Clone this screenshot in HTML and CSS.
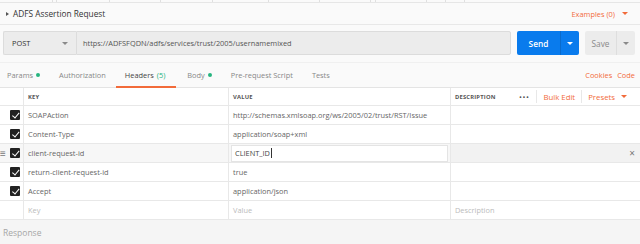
FILE: index.html
```html
<!DOCTYPE html>
<html lang="en">
<head>
    <meta charset="UTF-8">
    <meta name="viewport" content="width=device-width, initial-scale=1.0">
    <title>ADFS Assertion Request</title>
    <link rel="stylesheet" href="styles.css">
</head>
<body>
    <div class="window-tabs">
        <span style="width:52px"></span>
        <span style="width:3px"></span>
        <span style="width:52px"></span>
        <span style="width:50px"></span>
        <span style="width:51px"></span>
        <span style="width:55px"></span>
        <span style="width:50px"></span>
        <span style="width:50px"></span>
        <span style="width:4px"></span>
        <span style="width:50px"></span>
        <span style="width:18px"></span>
        <span style="width:18px"></span>
    </div>

    <div class="title-bar">
        <div class="title"><span class="arrow"></span>ADFS Assertion Request</div>
        <div class="examples">Examples (0) <span class="caret orange"></span></div>
    </div>

    <div class="url-bar">
        <div class="method">POST <span class="caret grey"></span></div>
        <div class="url">https://ADFSFQDN/adfs/services/trust/2005/usernamemixed</div>
        <div class="send">
            <span class="send-label">Send</span>
            <span class="send-split"><span class="caret white"></span></span>
        </div>
        <div class="save">
            <span class="save-label">Save</span>
            <span class="save-split"><span class="caret grey"></span></span>
        </div>
    </div>

    <div class="tabs">
        <span class="tab">Params <i class="dot"></i></span>
        <span class="tab">Authorization</span>
        <span class="tab active">Headers <em>(5)</em></span>
        <span class="tab">Body <i class="dot"></i></span>
        <span class="tab">Pre-request Script</span>
        <span class="tab">Tests</span>
        <span class="tab-links"><a>Cookies</a><a>Code</a></span>
    </div>

    <div class="grid">
        <div class="row head">
            <div class="cell check"></div>
            <div class="cell">KEY</div>
            <div class="cell">VALUE</div>
            <div class="cell desc-head">
                <span>DESCRIPTION</span>
                <span class="head-tools">
                    <span class="more">•••</span>
                    <a>Bulk Edit</a>
                    <a class="presets">Presets <span class="caret orange"></span></a>
                </span>
            </div>
        </div>
        <div class="row">
            <div class="cell check"><span class="box"></span></div>
            <div class="cell">SOAPAction</div>
            <div class="cell">http://schemas.xmlsoap.org/ws/2005/02/trust/RST/Issue</div>
            <div class="cell"></div>
        </div>
        <div class="row">
            <div class="cell check"><span class="box"></span></div>
            <div class="cell">Content-Type</div>
            <div class="cell">application/soap+xml</div>
            <div class="cell"></div>
        </div>
        <div class="row hover">
            <div class="cell check"><span class="handle">≡</span><span class="box"></span></div>
            <div class="cell">client-request-id</div>
            <div class="cell"><div class="edit">CLIENT_ID<span class="cursor"></span></div></div>
            <div class="cell desc-del"><span class="close">×</span></div>
        </div>
        <div class="row">
            <div class="cell check"><span class="box"></span></div>
            <div class="cell">return-client-request-id</div>
            <div class="cell">true</div>
            <div class="cell"></div>
        </div>
        <div class="row">
            <div class="cell check"><span class="box"></span></div>
            <div class="cell">Accept</div>
            <div class="cell">application/json</div>
            <div class="cell"></div>
        </div>
        <div class="row placeholder">
            <div class="cell check"></div>
            <div class="cell">Key</div>
            <div class="cell">Value</div>
            <div class="cell">Description</div>
        </div>
    </div>

    <div class="response">Response</div>
</body>
</html>
```

FILE: styles.css
```css
body {
    margin: 0;
    width: 640px;
    height: 244px;
    overflow: hidden;
    background: #fafafa;
    font-family: "Open Sans", "Noto Sans", sans-serif;
    font-size: 7.4px;
    color: #666;
}
a {
    color: #f26b3a;
}

/* strip of the window tabs above */
.window-tabs {
    display: flex;
    height: 2px;
    border-bottom: 1px solid #e6e6e6;
}
.window-tabs span {
    border-right: 1px solid #e0e0e0;
}

.title-bar {
    display: flex;
    align-items: center;
    justify-content: space-between;
    height: 21px;
    padding: 0 12px 0 6px;
    border-bottom: 1px solid #e8e8e8;
}
.title {
    display: flex;
    align-items: center;
    color: #333;
    font-size: 8.3px;
}
.arrow {
    width: 0;
    height: 0;
    margin-right: 4px;
    border-top: 2.5px solid transparent;
    border-bottom: 2.5px solid transparent;
    border-left: 3px solid #555;
}
.examples {
    display: flex;
    align-items: center;
    gap: 7px;
    color: #f26b3a;
}

.caret {
    display: inline-block;
    width: 0;
    height: 0;
    border-left: 3px solid transparent;
    border-right: 3px solid transparent;
    border-top: 3px solid #808080;
}
.caret.orange { border-top-color: #f26b3a; }
.caret.white { border-top-color: #fff; }
.caret.grey { border-top-color: #8a8a8a; }

.url-bar {
    display: flex;
    height: 24px;
    margin: 6px 5px 0 3px;
}
.method {
    display: flex;
    align-items: center;
    justify-content: space-between;
    width: 56px;
    padding: 0 8px;
    background: #ececec;
    border: 1px solid #dcdcdc;
    border-right: none;
    border-radius: 2px 0 0 2px;
    color: #333;
}
.url {
    flex: 1;
    display: flex;
    align-items: center;
    padding: 0 6px;
    background: #ececec;
    border: 1px solid #dcdcdc;
    border-radius: 0 2px 2px 0;
    color: #555;
}
.send {
    display: flex;
    margin-left: 6px;
    width: 62px;
    background: #097bed;
    border-radius: 2px;
    color: #fff;
    font-weight: 600;
    font-size: 8.3px;
}
.send-label {
    flex: 1;
    display: flex;
    align-items: center;
    justify-content: center;
}
.send-split {
    display: flex;
    align-items: center;
    justify-content: center;
    width: 18px;
    border-left: 1px solid #0a6bcc;
}
.save {
    display: flex;
    margin-left: 6px;
    width: 50px;
    background: #ececec;
    border-radius: 2px;
    color: #8a8a8a;
    font-size: 8.3px;
}
.save-label {
    flex: 1;
    display: flex;
    align-items: center;
    justify-content: center;
}
.save-split {
    display: flex;
    align-items: center;
    justify-content: center;
    width: 18px;
    border-left: 1px solid #dedede;
}

.tabs {
    display: flex;
    align-items: stretch;
    height: 24px;
    margin-top: 7px;
    padding-left: 7px;
    border-top: 1px solid #f0f0f0;
    border-bottom: 1px solid #e4e4e4;
    color: #888;
}
.tab {
    display: flex;
    align-items: center;
    gap: 3px;
    margin-right: 19px;
    border-bottom: 2px solid transparent;
    margin-bottom: -1px;
    padding-top: 1px;
}
.tab.active {
    color: #444;
    border-bottom-color: #f26b3a;
    padding: 1px 11px 0 9px;
    margin-left: -9px;
    margin-right: 11px;
}
.tab em {
    font-style: normal;
    color: #26b47f;
}
.dot {
    width: 4px;
    height: 4px;
    border-radius: 50%;
    background: #26b47f;
}
.tab-links {
    display: flex;
    align-items: center;
    gap: 5px;
    margin-left: auto;
    padding-right: 5px;
}

.grid {
    background: #fff;
}
.row {
    display: grid;
    grid-template-columns: 23px 205px 222px 1fr;
    height: 18px;
    border-bottom: 1px solid #e8e8e8;
}
.cell {
    display: flex;
    align-items: center;
    padding: 0 4px;
    border-left: 1px solid #e8e8e8;
    white-space: nowrap;
    overflow: hidden;
}
.cell.check {
    border-left: none;
    justify-content: flex-end;
    padding: 0 3px 0 0;
    position: relative;
}
.row.head {
    height: 17px;
    font-size: 5.8px;
    font-weight: 700;
    letter-spacing: 0.2px;
    color: #555;
}
.desc-head {
    justify-content: space-between;
    padding-right: 0;
}
.head-tools {
    display: flex;
    align-items: center;
    height: 100%;
    font-size: 7.8px;
    font-weight: 400;
    letter-spacing: 0;
}
.head-tools > * {
    display: flex;
    align-items: center;
    gap: 6px;
    height: 13px;
    padding: 0 6px;
    border-left: 1px solid #e8e8e8;
}
.head-tools .more {
    border-left: none;
    color: #555;
    letter-spacing: 0.5px;
    padding-right: 7px;
}
.head-tools .presets {
    padding-right: 13px;
}
.box {
    width: 10px;
    height: 10px;
    border-radius: 1px;
    background: #222;
    position: relative;
}
.box::after {
    content: "";
    position: absolute;
    left: 3.5px;
    top: 1px;
    width: 2.5px;
    height: 5.5px;
    border: solid #fff;
    border-width: 0 1.7px 1.7px 0;
    transform: rotate(40deg);
}
.handle {
    position: absolute;
    left: 0;
    top: 3px;
    font-size: 10px;
    line-height: 12px;
    color: #777;
}
.row.hover {
    background: #f7f7f7;
}
.edit {
    flex: 1;
    display: flex;
    align-items: center;
    height: 15px;
    margin: 0 -2px 0 -2px;
    padding: 0 3px;
    background: #fff;
    border: 1px solid #e4e4e4;
    color: #444;
}
.cursor {
    width: 1px;
    height: 10px;
    margin-left: 1px;
    background: #333;
}
.desc-del {
    background: #f2f2f2;
    justify-content: flex-end;
    padding-right: 5px;
}
.close {
    font-size: 10px;
    color: #777;
}
.row.placeholder {
    color: #bbb;
}

.response {
    height: 25px;
    display: flex;
    align-items: center;
    padding-left: 3px;
    background: #f5f5f5;
    color: #a5a5a5;
    font-size: 8.5px;
}
```
